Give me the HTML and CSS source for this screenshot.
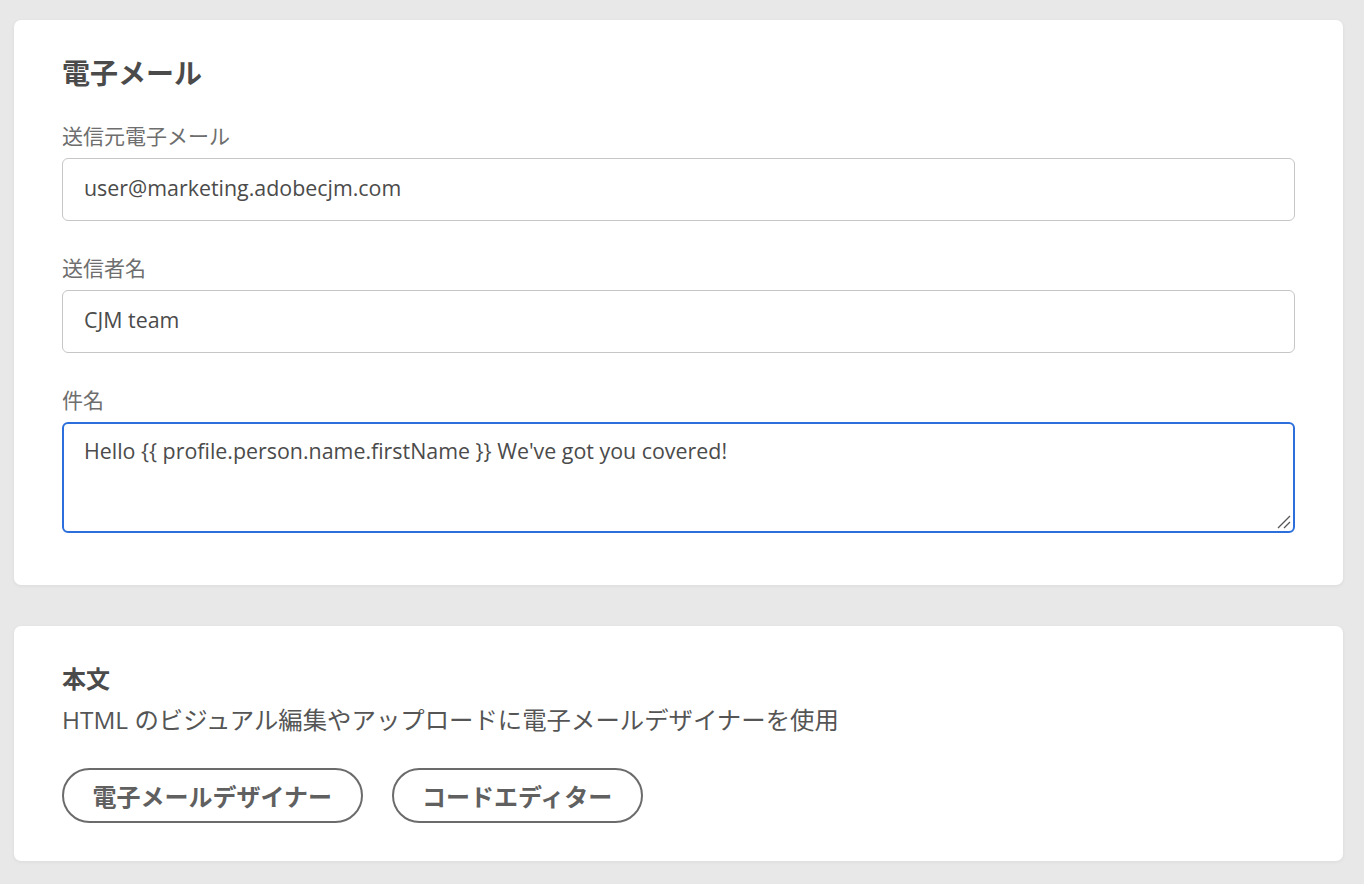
FILE: index.html
```html
<!DOCTYPE html>
<html lang="ja">
<head>
<meta charset="utf-8">
<link rel="stylesheet" href="styles.css">
</head>
<body>
<div class="page">
  <section class="card card-email">
    <h2 class="card-title">電子メール</h2>
    <div class="field">
      <label class="field-label">送信元電子メール</label>
      <div class="input">user@marketing.adobecjm.com</div>
    </div>
    <div class="field">
      <label class="field-label">送信者名</label>
      <div class="input">CJM team</div>
    </div>
    <div class="field">
      <label class="field-label">件名</label>
      <div class="textarea">Hello {{ profile.person.name.firstName }} We've got you covered!
        <svg class="grip" width="14" height="14" viewBox="0 0 14 14"><path d="M1 13 L13 1 M7 13 L13 7" stroke="#555" stroke-width="1.3" fill="none"/></svg>
      </div>
    </div>
  </section>
  <section class="card card-body">
    <h3 class="body-title">本文</h3>
    <p class="body-desc">HTML のビジュアル編集やアップロードに電子メールデザイナーを使用</p>
    <div class="buttons">
      <button class="pill">電子メールデザイナー</button>
      <button class="pill">コードエディター</button>
    </div>
  </section>
</div>
</body>
</html>
```
FILE: styles.css
```css
html, body {
  margin: 0;
  padding: 0;
  background: #e8e8e8;
}
body {
  font-family: "Open Sans", "Noto Sans CJK JP", sans-serif;
  color: #4b4b4b;
}
.page {
  padding: 20px 21px 23px 14px;
  display: flex;
  flex-direction: column;
  gap: 41px;
}
.card {
  background: #fff;
  border-radius: 7px;
  box-shadow: 0 1px 4px rgba(0,0,0,0.06);
  padding: 0 48px;
}
.card-email {
  height: 565px;
  box-sizing: border-box;
  padding-top: 34px;
}
.card-title {
  margin: 0;
  font-size: 28px;
  line-height: 36px;
  font-weight: 700;
  color: #4b4b4b;
  font-family: "Noto Sans CJK JP", sans-serif;
}
.field {
  display: flex;
  flex-direction: column;
}
.field-label {
  font-family: "Noto Sans CJK JP", sans-serif;
  font-size: 21px;
  line-height: 28px;
  color: #6e6e6e;
  margin-bottom: 9px;
}
.card-title + .field { margin-top: 31px; }
.field + .field { margin-top: 32px; }
.input, .textarea {
  box-sizing: border-box;
  border: 1px solid #c6c6c6;
  border-radius: 6px;
  padding: 0 21px 4px;
  font-size: 21.4px;
  color: #4b4b4b;
  height: 63px;
  display: flex;
  align-items: center;
}
.textarea {
  position: relative;
  height: 111px;
  border: 2px solid #2c6fdc;
  align-items: flex-start;
  padding: 13px 20px;
  line-height: 28px;
}
.grip {
  position: absolute;
  right: 2px;
  bottom: 2px;
}
.card-body {
  height: 235px;
  box-sizing: border-box;
  padding-top: 36px;
}
.body-title {
  margin: 0;
  font-family: "Noto Sans CJK JP", sans-serif;
  font-size: 24px;
  line-height: 32px;
  font-weight: 700;
  color: #4b4b4b;
}
.body-desc {
  margin: 10px 0 0;
  font-size: 24.4px;
  line-height: 32px;
  color: #555;
}
.buttons {
  display: flex;
  gap: 29px;
  margin-top: 32px;
}
.pill {
  font-family: "Noto Sans CJK JP", sans-serif;
  font-size: 24px;
  font-weight: 700;
  color: #606060;
  background: #fff;
  border: 2px solid #6b6b6b;
  border-radius: 28px;
  height: 55px;
  padding: 0 28.5px;
}
```
